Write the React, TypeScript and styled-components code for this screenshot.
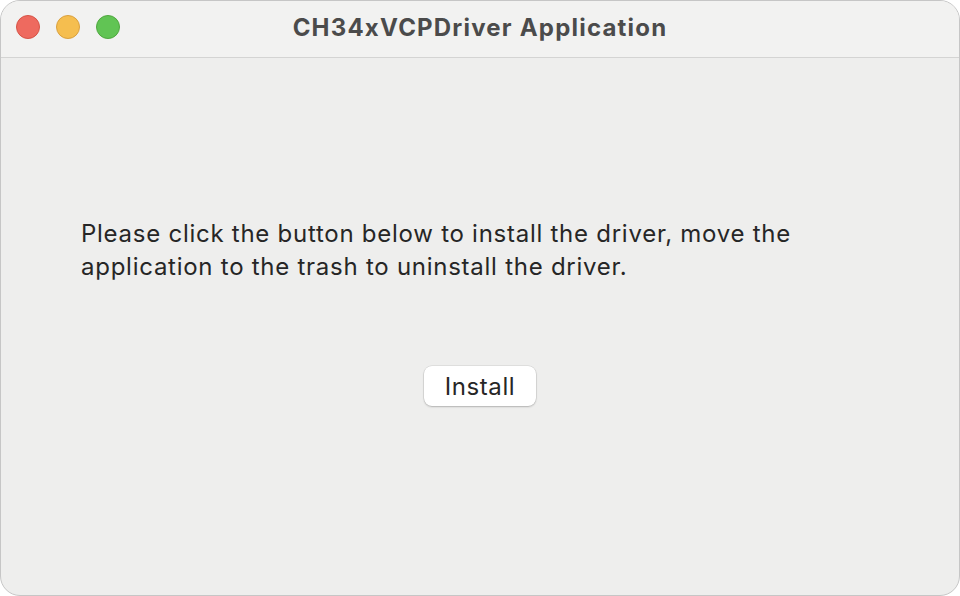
import React from "react";
import styled, { createGlobalStyle } from "styled-components";

const Global = createGlobalStyle`
  html, body { margin: 0; padding: 0; background: #ffffff; }
  body { font-family: Inter, "Liberation Sans", sans-serif; }
`;

const Window = styled.div`
  width: 960px;
  height: 596px;
  box-sizing: border-box;
  border: 1px solid #c6c6c6;
  border-radius: 20px;
  overflow: hidden;
  background: #eeeeed;
  display: flex;
  flex-direction: column;
`;

const TitleBar = styled.div`
  height: 56px;
  flex: none;
  background: #f2f2f1;
  border-bottom: 1px solid #d4d4d3;
  position: relative;
  display: flex;
  align-items: center;
  justify-content: center;
`;

const Lights = styled.div`
  position: absolute;
  left: 15px;
  top: 14px;
  display: flex;
  gap: 16px;
`;

const Light = styled.span<{ $fill: string; $edge: string }>`
  width: 24px;
  height: 24px;
  border-radius: 50%;
  box-sizing: border-box;
  background: ${(p) => p.$fill};
  border: 1px solid ${(p) => p.$edge};
`;

const Title = styled.div`
  font-size: 24px;
  font-weight: 700;
  color: #4b4b4b;
  letter-spacing: 1.2px;
  margin-top: -4px;
`;

const Content = styled.div`
  flex: 1;
  display: flex;
  flex-direction: column;
  padding: 159px 60px 0 80px;
`;

const Message = styled.p`
  margin: 0;
  font-size: 24px;
  line-height: 33px;
  color: #262626;
  letter-spacing: 0.74px;
`;

const ButtonRow = styled.div`
  display: flex;
  justify-content: center;
  margin-top: 83px;
  margin-left: -80px;
  margin-right: -60px;
`;

const Button = styled.button`
  width: 112px;
  height: 40px;
  border: none;
  border-radius: 8px;
  background: #ffffff;
  box-shadow: 0 0 0 0.5px rgba(0, 0, 0, 0.12), 0 1px 2px rgba(0, 0, 0, 0.2);
  font-family: Inter, "Liberation Sans", sans-serif;
  font-size: 24px;
  letter-spacing: 0.6px;
  color: #262626;
  padding: 0;
`;

export default function App() {
  return (
    <>
      <Global />
      <Window>
        <TitleBar>
          <Lights>
            <Light $fill="#ee6a5f" $edge="#d65447" />
            <Light $fill="#f5be4f" $edge="#d9a03f" />
            <Light $fill="#61c454" $edge="#50a73f" />
          </Lights>
          <Title>CH34xVCPDriver Application</Title>
        </TitleBar>
        <Content>
          <Message>
            Please click the button below to install the driver, move the
            application to the trash to uninstall the driver.
          </Message>
          <ButtonRow>
            <Button>Install</Button>
          </ButtonRow>
        </Content>
      </Window>
    </>
  );
}
